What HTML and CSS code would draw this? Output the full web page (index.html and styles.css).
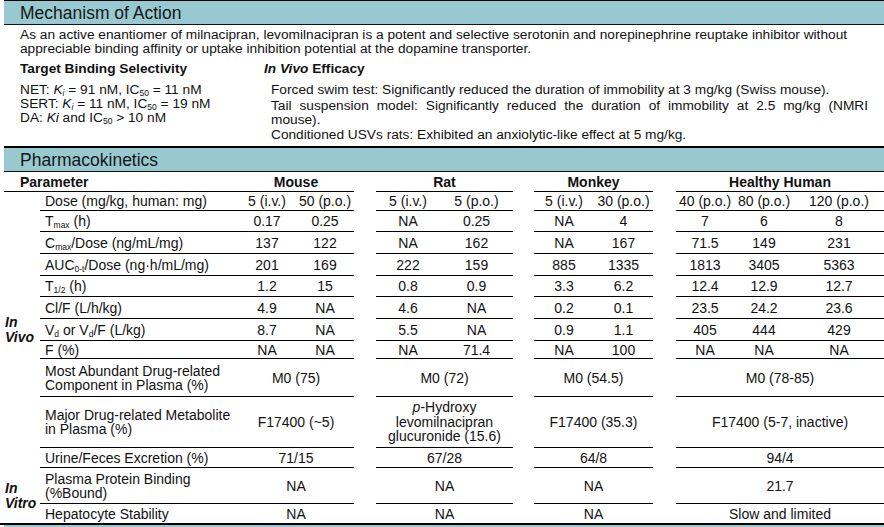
FILE: index.html
```html
<!DOCTYPE html>
<html lang="en">
<head>
<meta charset="utf-8">
<title>Levomilnacipran</title>
<link rel="stylesheet" href="styles.css">
</head>
<body>
<div class="page">
  <section class="moa">
    <h2 class="band band-first">Mechanism of Action</h2>
    <p class="intro">As an active enantiomer of milnacipran, levomilnacipran is a potent and selective serotonin and norepinephrine reuptake inhibitor without appreciable binding affinity or uptake inhibition potential at the dopamine transporter.</p>
    <div class="cols">
      <div class="col-left">
        <h3 class="sub-h">Target Binding Selectivity</h3>
        <p class="item">NET: <i>K<sub>i</sub></i> = 91 nM, IC<sub>50</sub> = 11 nM</p>
        <p class="item">SERT: <i>K<sub>i</sub></i> = 11 nM, IC<sub>50</sub> = 19 nM</p>
        <p class="item">DA: <i>Ki</i> and IC<sub>50</sub> &gt; 10 nM</p>
      </div>
      <div class="col-right">
        <h3 class="sub-h"><i>In Vivo</i> Efficacy</h3>
        <p class="eff">Forced swim test: Significantly reduced the duration of immobility at 3 mg/kg (Swiss mouse).</p>
        <p class="eff">Tail suspension model: Significantly reduced the duration of immobility at 2.5 mg/kg (NMRI mouse).</p>
        <p class="eff">Conditioned USVs rats: Exhibited an anxiolytic-like effect at 5 mg/kg.</p>
      </div>
    </div>
  </section>

  <section class="pk">
    <h2 class="band band-second">Pharmacokinetics</h2>
    <table class="pk-table">
      <colgroup>
        <col class="c-grp"><col class="c-param">
        <col class="c-m1"><col class="c-m2"><col class="c-gap1">
        <col class="c-r1"><col class="c-r2"><col class="c-gap2">
        <col class="c-k1"><col class="c-k2"><col class="c-gap3">
        <col class="c-h1"><col class="c-h2"><col class="c-h3">
      </colgroup>
      <thead>
        <tr class="head">
          <th colspan="2" class="ph">Parameter</th>
          <th colspan="2">Mouse</th><td class="gap"></td>
          <th colspan="2">Rat</th><td class="gap"></td>
          <th colspan="2">Monkey</th><td class="gap"></td>
          <th colspan="3">Healthy Human</th>
        </tr>
      </thead>
      <tbody>
        <tr class="r19">
          <th rowspan="11" class="grp">In<br>Vivo</th>
          <td class="param">Dose (mg/kg, human: mg)</td>
          <td>5 (i.v.)</td><td>50 (p.o.)</td><td class="gap"></td>
          <td>5 (i.v.)</td><td>5 (p.o.)</td><td class="gap"></td>
          <td>5 (i.v.)</td><td>30 (p.o.)</td><td class="gap"></td>
          <td>40 (p.o.)</td><td>80 (p.o.)</td><td>120 (p.o.)</td>
        </tr>
        <tr class="r21">
          <td class="param">T<sub>max</sub> (h)</td>
          <td>0.17</td><td>0.25</td><td class="gap"></td>
          <td>NA</td><td>0.25</td><td class="gap"></td>
          <td>NA</td><td>4</td><td class="gap"></td>
          <td>7</td><td>6</td><td>8</td>
        </tr>
        <tr class="r22">
          <td class="param">C<sub>max</sub>/Dose (ng/mL/mg)</td>
          <td>137</td><td>122</td><td class="gap"></td>
          <td>NA</td><td>162</td><td class="gap"></td>
          <td>NA</td><td>167</td><td class="gap"></td>
          <td>71.5</td><td>149</td><td>231</td>
        </tr>
        <tr class="r22">
          <td class="param">AUC<sub>0-t</sub>/Dose (ng·h/mL/mg)</td>
          <td>201</td><td>169</td><td class="gap"></td>
          <td>222</td><td>159</td><td class="gap"></td>
          <td>885</td><td>1335</td><td class="gap"></td>
          <td>1813</td><td>3405</td><td>5363</td>
        </tr>
        <tr class="r21">
          <td class="param">T<sub>1/2</sub> (h)</td>
          <td>1.2</td><td>15</td><td class="gap"></td>
          <td>0.8</td><td>0.9</td><td class="gap"></td>
          <td>3.3</td><td>6.2</td><td class="gap"></td>
          <td>12.4</td><td>12.9</td><td>12.7</td>
        </tr>
        <tr class="r22">
          <td class="param">Cl/F (L/h/kg)</td>
          <td>4.9</td><td>NA</td><td class="gap"></td>
          <td>4.6</td><td>NA</td><td class="gap"></td>
          <td>0.2</td><td>0.1</td><td class="gap"></td>
          <td>23.5</td><td>24.2</td><td>23.6</td>
        </tr>
        <tr class="r22">
          <td class="param">V<sub>d</sub> or V<sub>d</sub>/F (L/kg)</td>
          <td>8.7</td><td>NA</td><td class="gap"></td>
          <td>5.5</td><td>NA</td><td class="gap"></td>
          <td>0.9</td><td>1.1</td><td class="gap"></td>
          <td>405</td><td>444</td><td>429</td>
        </tr>
        <tr class="r18">
          <td class="param">F (%)</td>
          <td>NA</td><td>NA</td><td class="gap"></td>
          <td>NA</td><td>71.4</td><td class="gap"></td>
          <td>NA</td><td>100</td><td class="gap"></td>
          <td>NA</td><td>NA</td><td>NA</td>
        </tr>
        <tr class="r38">
          <td class="param">Most Abundant Drug-related<br>Component in Plasma (%)</td>
          <td colspan="2">M0 (75)</td><td class="gap"></td>
          <td colspan="2">M0 (72)</td><td class="gap"></td>
          <td colspan="2">M0 (54.5)</td><td class="gap"></td>
          <td colspan="3">M0 (78-85)</td>
        </tr>
        <tr class="r51">
          <td class="param">Major Drug-related Metabolite<br>in Plasma (%)</td>
          <td colspan="2">F17400 (~5)</td><td class="gap"></td>
          <td colspan="2" class="multi"><i>p</i>-Hydroxy<br>levomilnacipran<br>glucuronide (15.6)</td><td class="gap"></td>
          <td colspan="2">F17400 (35.3)</td><td class="gap"></td>
          <td colspan="3">F17400 (5-7, inactive)</td>
        </tr>
        <tr class="r20">
          <td class="param">Urine/Feces Excretion (%)</td>
          <td colspan="2">71/15</td><td class="gap"></td>
          <td colspan="2">67/28</td><td class="gap"></td>
          <td colspan="2">64/8</td><td class="gap"></td>
          <td colspan="3">94/4</td>
        </tr>
        <tr class="r36">
          <th rowspan="2" class="grp">In<br>Vitro</th>
          <td class="param">Plasma Protein Binding<br>(%Bound)</td>
          <td colspan="2">NA</td><td class="gap"></td>
          <td colspan="2">NA</td><td class="gap"></td>
          <td colspan="2">NA</td><td class="gap"></td>
          <td colspan="3">21.7</td>
        </tr>
        <tr class="r19 last">
          <td class="param">Hepatocyte Stability</td>
          <td colspan="2">NA</td><td class="gap"></td>
          <td colspan="2">NA</td><td class="gap"></td>
          <td colspan="2">NA</td><td class="gap"></td>
          <td colspan="3">Slow and limited</td>
        </tr>
      </tbody>
    </table>
  </section>
  <div class="foot"></div>
</div>
</body>
</html>
```

FILE: styles.css
```css
* { box-sizing: border-box; }
html, body { margin: 0; padding: 0; background: #fff; }
body {
  font-family: "Liberation Sans", Arial, sans-serif;
  color: #111;
  width: 884px;
  height: 527px;
  overflow: hidden;
}
.page { width: 884px; }

.band {
  margin: 0 0 0 4px;
  padding: 2px 0 0 16px;
  font-size: 17.5px;
  font-weight: normal;
  line-height: 21px;
  color: #161616;
  background: #98c9d1;
  border-bottom: 1px solid #111;
}
.band-first { height: 25px; border-top: 1px solid #000; }
.band-second { height: 26px; border-top: 2px solid #000; margin-top: 2.5px; }

.intro {
  margin: 3px 0 0 20px;
  width: 852px;
  font-size: 13.7px;
  line-height: 14px;
}

.cols {
  display: flex;
  margin: 6px 0 0 20px;
  font-size: 13.7px;
  line-height: 14px;
}
.col-left { width: 244px; }
.col-right { width: 604px; }
.sub-h {
  margin: 0 0 7px;
  font-size: 13.7px;
  line-height: 14px;
  font-weight: bold;
}
.item { margin: 0; }
.eff {
  margin: 0 0 1.5px 7px;
  text-align: justify;
}
sub {
  font-size: 8.5px;
  line-height: 0;
  vertical-align: -2px;
}

.pk-table {
  margin-left: 4px;
  width: 880px;
  table-layout: fixed;
  border-collapse: separate;
  border-spacing: 0;
  font-size: 14px;
  line-height: 14px;
}
.c-grp { width: 36px; }
.c-param { width: 198px; }
.c-m1 { width: 58px; }
.c-m2 { width: 58px; }
.c-gap1 { width: 22px; }
.c-r1 { width: 64px; }
.c-r2 { width: 73px; }
.c-gap2 { width: 21px; }
.c-k1 { width: 60px; }
.c-k2 { width: 59px; }
.c-gap3 { width: 23px; }
.c-h1 { width: 58px; }
.c-h2 { width: 60px; }
.c-h3 { width: 90px; }

.pk-table th,
.pk-table td {
  padding: 0;
  text-align: center;
  vertical-align: middle;
  font-weight: normal;
  white-space: nowrap;
  border-bottom: 1px solid #000;
}
.pk-table .gap { border-bottom: none; }
.pk-table .head { height: 20px; }
.pk-table .head th { font-weight: bold; }
.pk-table .head .ph { text-align: left; padding-left: 16px; }
.pk-table .grp {
  border-bottom: none;
  text-align: left;
  padding-left: 1px;
  font-weight: bold;
  font-style: italic;
  line-height: 15px;
}
.pk-table .param { text-align: left; padding-left: 5px; }
.pk-table .multi { line-height: 14.5px; }
.pk-table .last td { border-bottom: none; }

.r18 { height: 18px; }
.r19 { height: 19px; }
.r20 { height: 20px; }
.r21 { height: 21px; }
.r22 { height: 22px; }
.r36 { height: 36px; }
.r38 { height: 38px; }
.r51 { height: 51px; }

.foot {
  height: 4px;
  border-top: 2px solid #000;
  background: linear-gradient(90deg, #fff 0 4px, #98c9d1 4px);
}
```
